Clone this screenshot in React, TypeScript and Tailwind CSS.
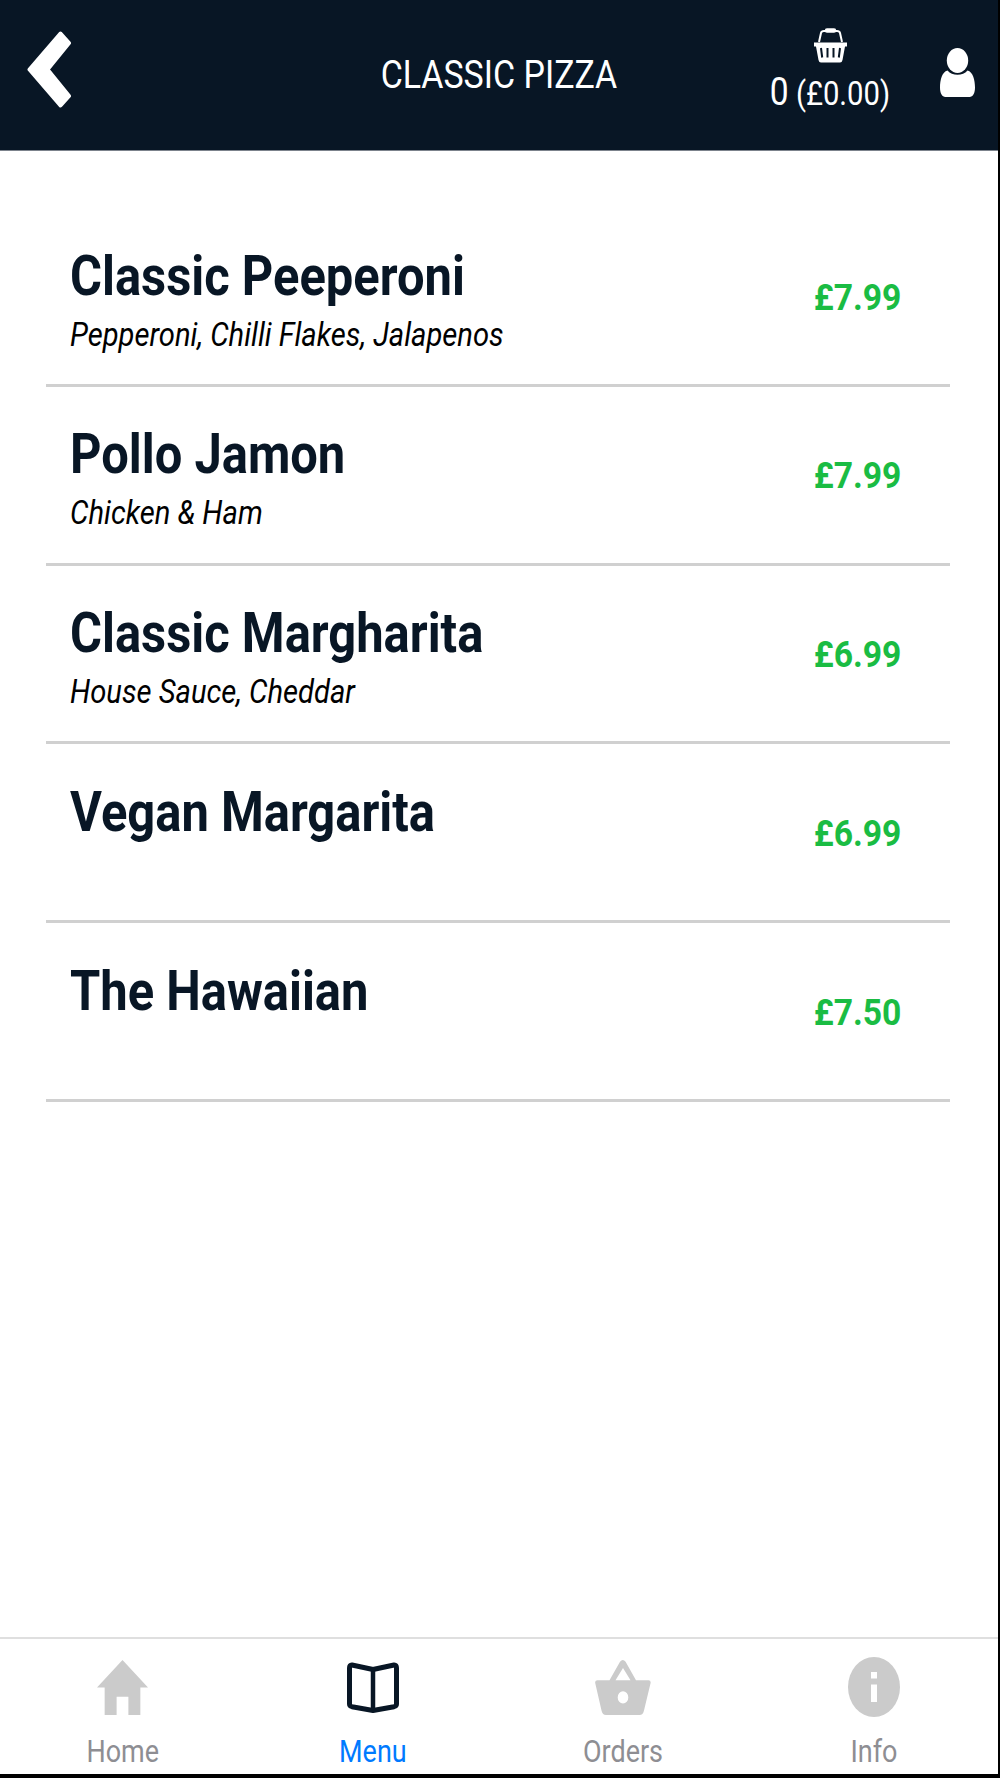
import type { ReactNode } from 'react';

interface Pizza {
  name: string;
  toppings?: string;
  price: string;
}

interface Tab {
  label: string;
  icon: ReactNode;
  active?: boolean;
}

const pizzas: Pizza[] = [
  { name: 'Classic Peeperoni', toppings: 'Pepperoni, Chilli Flakes, Jalapenos', price: '£7.99' },
  { name: 'Pollo Jamon', toppings: 'Chicken & Ham', price: '£7.99' },
  { name: 'Classic Margharita', toppings: 'House Sauce, Cheddar', price: '£6.99' },
  { name: 'Vegan Margarita', price: '£6.99' },
  { name: 'The Hawaiian', price: '£7.50' },
];

function ChevronIcon() {
  return (
    <svg width="44" height="77" viewBox="0 0 44 77" fill="#fff" stroke="#fff" strokeWidth="4" strokeLinejoin="round">
      <path d="M33.5 2.5 42 12 20.500 38.500 42 65 33.500 74.500 2.500 38.500Z" />
    </svg>
  );
}

function ShoppingBasketIcon() {
  return (
    <svg width="33" height="35" viewBox="0 0 33 35" fill="none" stroke="#fff">
      <path d="M5 14 7 5Q7.500 3 10 3H23Q25.500 3 26 5L28 14" strokeWidth="2" />
      <path d="M13 2.500H20" strokeWidth="4.500" strokeLinecap="round" />
      <path d="M0 14.500H33V18.500H31L28.500 32Q28 34.500 26 34.500H7Q5 34.500 4.500 32L2 18.500H0Z" fill="#fff" stroke="none" />
      <path d="M7 20 8.200 29.500M13.500 20V29.500M19.500 20V29.500M26 20 24.800 29.500" stroke="#081625" strokeWidth="2" />
    </svg>
  );
}

function UserIcon() {
  return (
    <svg width="35" height="49" viewBox="0 0 35 49" fill="#fff">
      <ellipse cx="17.500" cy="12.500" rx="10.700" ry="12.500" />
      <path d="M7.500 22.500C10 25.700 13.500 26.800 17.500 26.800S25 25.700 27.500 22.500C33 24 35 32 35 39.500C35 45 33 49 29.500 49H5.500C2 49 0 45 0 39.500C0 32 2 24 7.500 22.500Z" />
    </svg>
  );
}

function HomeIcon() {
  return (
    <svg width="51" height="55" viewBox="48 64 416 384" preserveAspectRatio="none" fill="#cbcbcb">
      <path d="M208 448V320h96v128h97.600V256H464L256 64 48 256h62.400v192z" />
    </svg>
  );
}

function BookIcon() {
  return (
    <svg width="52" height="51" viewBox="0 0 52 51" fill="none" stroke="#081625" strokeLinejoin="round">
      <path d="M26 7.500 5 3Q2.500 2.800 2.500 6V42Q2.500 44 5 44.700L26 48.500 47 44.700Q49.500 44 49.500 42V6Q49.500 2.800 47 3Z" strokeWidth="5" />
      <path d="M26 7V48" strokeWidth="4.500" />
    </svg>
  );
}

function OrdersIcon() {
  return (
    <svg width="56" height="55" viewBox="0 0 56 55" fill="#cbcbcb">
      <path
        fillRule="evenodd"
        d="M14.500 20.200 25 1.800Q27.800-1.600 30.600 1.800L41 20.200H53.500Q56 20.200 55.600 23L49 50.500Q48 55 44.500 55H11Q7.500 55 6.500 50.500L.2 23Q-.2 20.200 2.500 20.200ZM20.500 20.200H35.500L28 8ZM28 31.300A5.300 6.100 0 1 0 28 43.500A5.300 6.100 0 1 0 28 31.300Z"
      />
    </svg>
  );
}

function InfoIcon() {
  return (
    <svg width="52" height="60" viewBox="0 0 52 60">
      <ellipse cx="26" cy="30" rx="26" ry="30" fill="#cbcbcb" />
      <path d="M23 15h6v6.500h-6zM23 27.500h6v17.500h-6z" fill="#fff" />
    </svg>
  );
}

const tabs: Tab[] = [
  { label: 'Home', icon: <HomeIcon /> },
  { label: 'Menu', icon: <BookIcon />, active: true },
  { label: 'Orders', icon: <OrdersIcon /> },
  { label: 'Info', icon: <InfoIcon /> },
];

function Header() {
  return (
    <header className="grid h-[151px] shrink-0 grid-cols-[250px_1fr_250px] border-b border-[#7c838c] bg-[#081625] text-white">
      <button className="flex items-start pt-[31px] pl-[27px]" aria-label="Back">
        <ChevronIcon />
      </button>
      <h1 className="flex items-center justify-center text-[39px] leading-none">
        <span className="scale-x-[0.87] whitespace-nowrap">CLASSIC PIZZA</span>
      </h1>
      <div className="flex pl-[2px]">
        <div className="flex w-[160px] flex-col items-center pt-[28px]">
          <ShoppingBasketIcon />
          <div className="mt-2 scale-x-[0.86] whitespace-nowrap text-[34px] leading-[42px]">
            <span className="text-[39px]">0</span> (£0.00)
          </div>
        </div>
        <div className="pt-[48px] pl-[30px]">
          <UserIcon />
        </div>
      </div>
    </header>
  );
}

function PizzaRow({ pizza }: { pizza: Pizza }) {
  return (
    <li className="flex h-[178.800px] justify-between border-b-[3px] border-[#d0d0d0] pr-[49px] pl-[24px]">
      <div className="pt-[34.500px]">
        <h2 className="origin-left scale-x-[0.873] whitespace-nowrap text-[56px] leading-[66px] font-bold text-[#081625]">
          {pizza.name}
        </h2>
        {pizza.toppings ? (
          <p className="origin-left scale-x-[0.858] whitespace-nowrap text-[34px] leading-[50px] text-black italic">{pizza.toppings}</p>
        ) : null}
      </div>
      <span className="origin-right scale-x-[0.91] pt-[66.500px] text-[37px] leading-[46px] font-bold text-[#1abc43]">{pizza.price}</span>
    </li>
  );
}

function TabBar() {
  return (
    <nav className="-mr-px -ml-[3px] grid h-[137px] shrink-0 grid-cols-4 border-t-2 border-[#dfdfdf]">
      {tabs.map((tab) => (
        <button key={tab.label} className="flex flex-col items-center pt-[17px]">
          <span className="flex h-[62px] items-center">{tab.icon}</span>
          <span className={`mt-[15px] scale-x-[0.87] text-[31px] leading-[38px] ${tab.active ? 'text-[#007aff]' : 'text-[#8e8e93]'}`}>
            {tab.label}
          </span>
        </button>
      ))}
    </nav>
  );
}

export default function App() {
  return (
    <div className="flex h-[1778px] w-[1000px] flex-col overflow-hidden border-r-2 border-b-4 border-black bg-white font-[Roboto,sans-serif]">
      <Header />
      <main className="flex-1 pt-[57px] pr-[48px] pl-[46px]">
        <ul>
          {pizzas.map((pizza) => (
            <PizzaRow key={pizza.name} pizza={pizza} />
          ))}
        </ul>
      </main>
      <TabBar />
    </div>
  );
}
